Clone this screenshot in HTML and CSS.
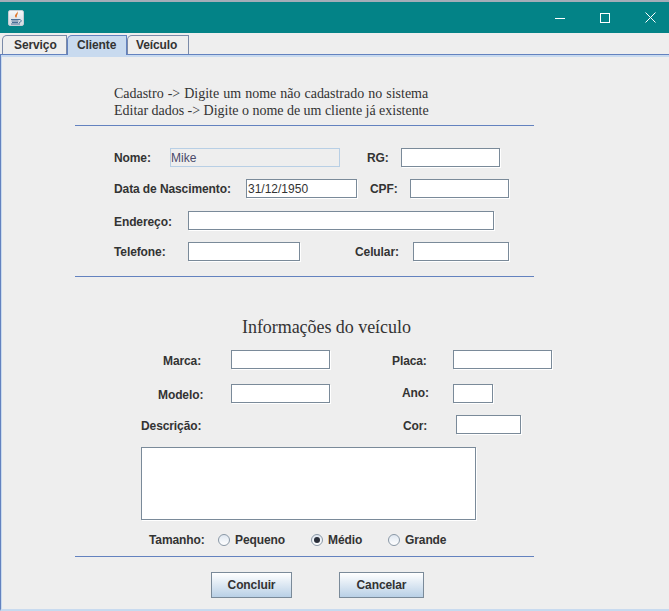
FILE: index.html
```html
<!DOCTYPE html>
<html lang="pt">

<head>
    <meta charset="UTF-8">
    <meta name="viewport" content="width=device-width, initial-scale=1.0">
    <title>Cliente</title>
    <link rel="stylesheet" href="styles.css">
</head>

<body>

    <!-- Title bar -->
    <header class="titlebar">
        <span class="app-icon">
            <svg width="14" height="14" viewBox="0 0 14 14">
                <path d="M8 0C9 2 6 3 6 5C6 6 7 6.500 7 7C8 5.500 8 4.500 8 4C9 3 9 1.500 8 0Z" fill="#e0762a" />
                <path d="M2 8.500H10M2.500 10H9.500M3 11.500H9M2 13H11" stroke="#4a6f96" stroke-width="1" fill="none" />
                <path d="M10 8.500C13 8.500 13 11 10 11.500" stroke="#4a6f96" stroke-width="1" fill="none" />
            </svg>
        </span>
        <div class="window-buttons">
            <svg width="10" height="10" viewBox="0 0 10 10"><path d="M0 5.500H10" stroke="#fff" /></svg>
            <svg width="10" height="10" viewBox="0 0 10 10"><rect x="0.500" y="0.500" width="9" height="9" fill="none" stroke="#fff" /></svg>
            <svg width="11" height="11" viewBox="0 0 11 11"><path d="M0.500 0.500L10.500 10.500M10.500 0.500L0.500 10.500" stroke="#fff" /></svg>
        </div>
    </header>

    <!-- Tabs -->
    <nav class="tabs">
        <div class="tab tab-servico">Serviço</div>
        <div class="tab tab-cliente">Cliente</div>
        <div class="tab tab-veiculo">Veículo</div>
    </nav>

    <main class="panel">
        <div class="help-text">
            <p class="help-first">Cadastro -&gt; Digite um nome não cadastrado no sistema</p>
            <p>Editar dados -&gt; Digite o nome de um cliente já existente</p>
        </div>
        <div class="divider divider-first"></div>

        <!-- Cliente -->
        <div class="row row-nome">
            <label class="lbl lbl-nome">Nome:</label>
            <input class="field field-nome" value="Mike" disabled>
            <label class="lbl lbl-rg">RG:</label>
            <input class="field field-rg">
        </div>
        <div class="row row-nasc">
            <label class="lbl lbl-nasc">Data de Nascimento:</label>
            <input class="field field-nasc" value="31/12/1950">
            <label class="lbl lbl-cpf">CPF:</label>
            <input class="field field-cpf">
        </div>
        <div class="row row-end">
            <label class="lbl lbl-end">Endereço:</label>
            <input class="field field-end">
        </div>
        <div class="row row-tel">
            <label class="lbl lbl-tel">Telefone:</label>
            <input class="field field-tel">
            <label class="lbl lbl-cel">Celular:</label>
            <input class="field field-cel">
        </div>
        <div class="divider divider-second"></div>

        <!-- Veiculo -->
        <h2 class="section-title">Informações do veículo</h2>
        <div class="row row-marca">
            <label class="lbl lbl-marca">Marca:</label>
            <input class="field field-marca">
            <label class="lbl lbl-placa">Placa:</label>
            <input class="field field-placa">
        </div>
        <div class="row row-modelo">
            <label class="lbl lbl-modelo">Modelo:</label>
            <input class="field field-modelo">
            <label class="lbl lbl-ano">Ano:</label>
            <input class="field field-ano">
        </div>
        <div class="row row-desc">
            <label class="lbl lbl-desc">Descrição:</label>
            <label class="lbl lbl-cor">Cor:</label>
            <input class="field field-cor">
        </div>
        <textarea class="field descricao"></textarea>

        <div class="row row-tamanho">
            <span class="lbl lbl-tamanho">Tamanho:</span>
            <span class="radio"></span><span class="lbl lbl-pequeno">Pequeno</span>
            <span class="radio radio-on"></span><span class="lbl lbl-medio">Médio</span>
            <span class="radio"></span><span class="lbl">Grande</span>
        </div>
        <div class="divider divider-third"></div>

        <div class="row row-buttons">
            <button class="btn btn-concluir">Concluir</button>
            <button class="btn btn-cancelar">Cancelar</button>
        </div>
    </main>

</body>

</html>
```
FILE: styles.css
```css
/* General Reset */
* {
    margin: 0;
    padding: 0;
    box-sizing: border-box;
}

html,
body {
    height: 611px;
    overflow: hidden;
}

body {
    font-family: 'Liberation Sans', Arial, sans-serif;
    font-size: 12px;
    letter-spacing: -0.1px;
    background-color: #eeeeee;
    color: #333333;
    display: flex;
    flex-direction: column;
}

/* Title bar */
.titlebar {
    height: 33px;
    flex: none;
    background: #038387;
    border-top: 2px solid #a3adb8;
    display: flex;
    align-items: center;
    justify-content: space-between;
    padding: 0 13px 0 8px;
}

.app-icon {
    width: 16px;
    height: 16px;
    background: linear-gradient(#f4f6f8, #d5dbe1);
    border: 1px solid #c4ccd4;
    border-radius: 2px;
    display: flex;
}

.window-buttons {
    display: flex;
    align-items: center;
    gap: 35px;
}

/* Tabs */
.tabs {
    height: 21px;
    flex: none;
    display: flex;
    padding: 2px 0 0 2px;
    background: #eeeeee;
}

.tab {
    height: 19px;
    padding-top: 2px;
    font-weight: bold;
    border: 1px solid #7a8aa8;
    border-bottom: none;
    border-top-left-radius: 5px;
}

.tab-servico {
    width: 65px;
    padding-left: 11px;
}

.tab-cliente {
    width: 60px;
    height: 20px;
    padding-left: 9px;
    background: #c8daef;
    border-color: #6382bf;
    z-index: 1;
}

.tab-veiculo {
    width: 62px;
    padding-left: 8px;
}

/* Content panel */
.panel {
    flex: 1;
    border-top: 1px solid #6382bf;
    border-left: 1px solid #6382bf;
    border-bottom: 2px solid #c8daef;
    box-shadow: inset 1px 2px 0 #c8daef;
    padding-top: 30px;
}

.help-text {
    margin-left: 74px;
    width: 441px;
    padding-left: 39px;
    font-family: 'Liberation Serif', 'Times New Roman', serif;
    font-size: 14px;
    letter-spacing: -0.02px;
    line-height: 17px;
}

.help-first {
    word-spacing: 0.6px;
}

.divider {
    height: 1px;
    background: #6382bf;
    width: 459px;
    margin-left: 74px;
}

.divider-first {
    margin-top: 6px;
}

.divider-second {
    margin-top: 15px;
}

.divider-third {
    margin-top: 8px;
}

.row {
    display: flex;
    align-items: center;
}

.lbl {
    font-weight: bold;
    white-space: nowrap;
}

.field {
    display: block;
    height: 19px;
    background: #ffffff;
    border: 1px solid #7a8a99;
    box-shadow: 1px 1px 0 #ffffff;
    font-family: 'Liberation Sans', Arial, sans-serif;
    font-size: 12px;
    color: #333333;
    padding: 0 1px;
    outline: none;
    resize: none;
}

.field-nome {
    width: 170px;
    padding: 0;
    background: #eeeeee;
    border: 1px solid #b8cfe5;
    box-shadow: none;
    color: #4a4a6a;
}

/* Cliente rows */
.row-nome {
    margin-top: 22px;
    padding-left: 113px;
}

.lbl-nome {
    width: 56px;
}

.lbl-rg {
    margin-left: 27px;
    width: 34px;
}

.field-rg {
    width: 99px;
}

.row-nasc {
    margin-top: 12px;
    padding-left: 113px;
}

.lbl-nasc {
    width: 132px;
}

.field-nasc {
    width: 111px;
}

.lbl-cpf {
    margin-left: 13px;
    width: 40px;
}

.field-cpf {
    width: 99px;
}

.row-end {
    margin-top: 13px;
    padding-left: 113px;
}

.lbl-end {
    width: 74px;
    margin-top: 2px;
}

.field-end {
    width: 306px;
}

.row-tel {
    margin-top: 12px;
    padding-left: 113px;
}

.lbl-tel {
    width: 74px;
}

.field-tel {
    width: 112px;
}

.lbl-cel {
    margin-left: 55px;
    width: 58px;
}

.field-cel {
    width: 96px;
}

/* Veiculo */
.section-title {
    margin-top: 40px;
    margin-left: 241px;
    font-family: 'Liberation Serif', 'Times New Roman', serif;
    font-size: 18px;
    font-weight: normal;
    letter-spacing: -0.05px;
    line-height: 20px;
}

.row-marca {
    margin-top: 13px;
}

.lbl-marca {
    margin-left: 162px;
    margin-top: 3px;
    width: 68px;
}

.field-marca {
    width: 99px;
}

.lbl-placa {
    margin-left: 62px;
    margin-top: 3px;
    width: 61px;
}

.field-placa {
    width: 99px;
}

.row-modelo {
    margin-top: 15px;
}

.lbl-modelo {
    margin-left: 157px;
    margin-top: 3px;
    width: 73px;
}

.field-modelo {
    width: 99px;
}

.lbl-ano {
    margin-left: 72px;
    margin-bottom: 2px;
    width: 51px;
}

.field-ano {
    width: 40px;
}

.row-desc {
    margin-top: 12px;
}

.lbl-desc {
    margin-left: 140px;
    margin-top: 2px;
    width: 262px;
}

.lbl-cor {
    margin-top: 2px;
    width: 53px;
}

.field-cor {
    width: 65px;
}

.descricao {
    width: 335px;
    height: 73px;
    margin: 13px 0 0 140px;
}

/* Tamanho */
.row-tamanho {
    margin-top: 12px;
    height: 16px;
    padding-left: 148px;
}

.lbl-tamanho {
    width: 69px;
}

.radio {
    width: 12px;
    height: 12px;
    border-radius: 50%;
    border: 1px solid #8a98a6;
    background: linear-gradient(#dfe7f0, #ffffff);
    margin-right: 5px;
    display: flex;
    align-items: center;
    justify-content: center;
}

.radio-on::after {
    content: "";
    width: 6px;
    height: 6px;
    border-radius: 50%;
    background: #2a2f3a;
}

.lbl-pequeno {
    width: 76px;
}

.lbl-medio {
    width: 60px;
}

/* Buttons */
.row-buttons {
    margin-top: 15px;
}

.btn {
    height: 26px;
    border: 1px solid #7a8a99;
    background: linear-gradient(#ffffff, #b9d0e6);
    font-family: 'Liberation Sans', Arial, sans-serif;
    font-size: 12px;
    font-weight: bold;
    letter-spacing: -0.1px;
    color: #333333;
}

.btn-concluir {
    width: 81px;
    margin-left: 210px;
}

.btn-cancelar {
    width: 85px;
    margin-left: 47px;
}
```
